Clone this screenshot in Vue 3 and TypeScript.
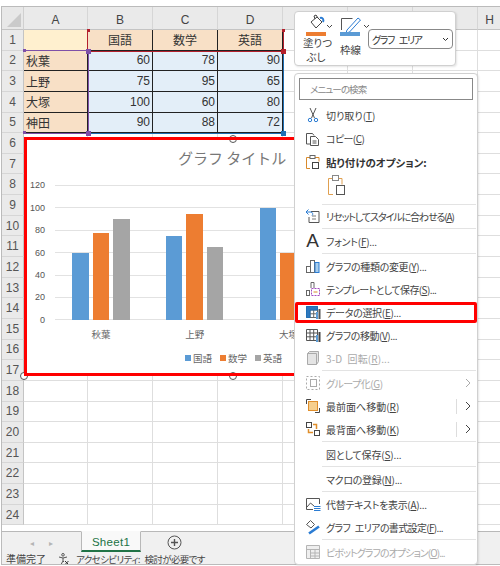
<script setup lang="ts">
const rows = Array.from({ length: 24 }, (_, i) => i + 1)
const cols = ["A", "B", "C", "D", "E", "F", "G", "H"]

const table = [
  { name: "秋葉", vals: [60, 78, 90] },
  { name: "上野", vals: [75, 95, 65] },
  { name: "大塚", vals: [100, 60, 80] },
  { name: "神田", vals: [90, 88, 72] },
]
const heads = ["国語", "数学", "英語"]
const colors = ["#5b9bd5", "#ed7d31", "#a5a5a5"]
const ticks = [120, 100, 80, 60, 40, 20, 0]
const groups = table.slice(0, 3)

const barHeight = (v: number) => `${(v / 120) * 134}px`

// ls: letter spacing per label, the original font has narrower kana
type Item = { label: string; key: string; tail?: string; icon?: string; off?: boolean; sub?: boolean; split?: boolean; line?: boolean; hot?: boolean; ls: number }

const items: Item[] = [
  { label: "リセットしてスタイルに合わせる(", key: "A", tail: ")", icon: "reset", line: true, ls: -1.1 },
  { label: "フォント(", key: "F", tail: ")...", icon: "font", line: true, ls: -0.25 },
  { label: "グラフの種類の変更(", key: "Y", tail: ")...", icon: "bars", ls: -0.35 },
  { label: "テンプレートとして保存(", key: "S", tail: ")...", icon: "tpl", ls: -0.6 },
  { label: "データの選択(", key: "E", tail: ")...", icon: "data", hot: true, ls: -0.3 },
  { label: "グラフの移動(", key: "V", tail: ")...", icon: "move", ls: -0.45 },
  { label: "3-D 回転(", key: "R", tail: ")...", icon: "cube", off: true, line: true, ls: 0.1 },
  { label: "グループ化(", key: "G", tail: ")", icon: "group", off: true, sub: true, ls: -0.5 },
  { label: "最前面へ移動(", key: "R", tail: ")", icon: "front", sub: true, split: true, ls: 0 },
  { label: "最背面へ移動(", key: "K", tail: ")", icon: "back", sub: true, split: true, line: true, ls: 0 },
  { label: "図として保存(", key: "S", tail: ")...", line: true, ls: -0.15 },
  { label: "マクロの登録(", key: "N", tail: ")...", line: true, ls: -0.3 },
  { label: "代替テキストを表示(", key: "A", tail: ")...", icon: "alt", ls: -0.3 },
  { label: "グラフ エリアの書式設定(", key: "F", tail: ")...", icon: "fmt", line: true, ls: -0.65 },
  { label: "ピボットグラフのオプション(", key: "O", tail: ")...", icon: "pivot", off: true, ls: -0.95 },
]
</script>

<template>
  <div class="page">
    <div class="book">
      <div class="sheet">
        <div class="corner"><i></i></div>
        <div v-for="c in cols" :key="c" class="col-head">{{ c }}</div>
        <template v-for="r in rows" :key="r">
          <div class="row-head">{{ r }}</div>
          <div v-for="c in cols" :key="c" class="cell"></div>
        </template>
      </div>

      <div class="data">
        <div class="d a blank"></div>
        <div v-for="h in heads" :key="h" class="d head">{{ h }}</div>
        <template v-for="t in table" :key="t.name">
          <div class="d a">{{ t.name }}</div>
          <div v-for="(v, i) in t.vals" :key="i" class="d num">{{ v }}</div>
        </template>
        <span class="range red"></span>
        <span class="range purple"></span>
        <span class="range blue"></span>
        <b class="dot tiny d1"></b>
        <b class="dot tiny d2"></b>
        <b class="dot tiny d3"></b>
        <b class="dot tiny d4"></b>
        <b class="dot d5"></b>
        <b class="dot d6"></b>
        <b class="dot d7"></b>
        <b class="dot d8"></b>
      </div>

      <div class="chart">
        <div class="chart-title">グラフ タイトル</div>
        <div class="plot">
          <div v-for="t in ticks" :key="t" class="tick"><span>{{ t }}</span><i></i></div>
          <div class="groups">
            <div v-for="g in groups" :key="g.name" class="group">
              <div class="bars">
                <div v-for="(v, i) in g.vals" :key="i" class="bar" :style="{ height: barHeight(v), background: colors[i] }"></div>
              </div>
              <div class="cat">{{ g.name }}</div>
            </div>
          </div>
        </div>
        <div class="legend">
          <span v-for="(h, i) in heads" :key="h"><i :style="{ background: colors[i] }"></i>{{ h }}</span>
        </div>
        <span class="handle top"></span>
        <span class="handle bottom"></span>
        <span class="handle corner-h"></span>
      </div>

      <div class="tabs">
        <div class="nav"><span>◂</span><span>▸</span></div>
        <div class="tab">Sheet1</div>
        <svg class="add" width="15" height="15" viewBox="0 0 15 15" fill="none" stroke="#555">
          <circle cx="7.5" cy="7.5" r="6.5" /><path d="M7.5 4v7M4 7.5h7" stroke-width="1.4" />
        </svg>
      </div>
      <div class="status">
        <span>準備完了</span>
        <svg width="10" height="12" viewBox="0 0 10 12" fill="none" stroke="#555">
          <circle cx="4" cy="1.8" r="1.3" /><path d="M0 4l4 1 4-1M4 5v3L2 11.5M4 8l1 1" /><path d="M6 8l3.5 3.5M9.5 8L6 11.5" stroke="#333" />
        </svg>
        <span class="a11y">アクセシビリティ: 検討が必要です</span>
      </div>
    </div>

    <div class="mini">
      <div class="mini-btn fill">
        <svg width="26" height="25" viewBox="0 0 26 25" fill="none">
          <path d="M8 10l6-5 5 5-6 6z" stroke="#444" />
          <path d="M12 7l-1-3 2-1 2 3" stroke="#444" />
          <path d="M17 6c3-1 4 2 3 4" stroke="#2b7cd3" stroke-width="2" />
          <rect x="3" y="20" width="20" height="4" fill="#ed7d31" />
        </svg>
        <svg class="chev" width="7" height="5" viewBox="0 0 7 5" fill="none" stroke="#444"><path d="M1 1l2.5 2.5L6 1" /></svg>
        <span>塗りつ<br />ぶし</span>
      </div>
      <div class="mini-btn wide">
        <svg width="26" height="25" viewBox="0 0 26 25" fill="none">
          <path d="M1.5 18V6.500h11" stroke="#555" />
          <path d="M7 18l11-12 2.500 2-11 12-3.500 1z" stroke="#2b7cd3" />
          <rect x="0" y="20" width="20" height="4" fill="#5b9bd5" />
        </svg>
        <svg class="chev" width="7" height="5" viewBox="0 0 7 5" fill="none" stroke="#444"><path d="M1 1l2.5 2.5L6 1" /></svg>
        <span>枠線</span>
      </div>
      <div class="select">
        <span>グラフ エリア</span>
        <svg width="7" height="5" viewBox="0 0 7 5" fill="none" stroke="#333"><path d="M1 1l2.5 2.5L6 1" /></svg>
      </div>
    </div>

    <div class="menu">
      <div class="search">メニューの検索</div>
      <div class="mi top-row">
        <div class="ico">
          <svg width="16" height="16" viewBox="0 0 16 16" fill="none" stroke="#555">
            <path d="M5 1l4.500 10M11 1L6.500 11" /><circle cx="5" cy="13" r="1.7" stroke="#2b7cd3" /><circle cx="11" cy="13" r="1.7" stroke="#2b7cd3" />
          </svg>
        </div>
        <span>切り取り(<u>T</u>)</span>
      </div>
      <div class="mi top-row">
        <div class="ico">
          <svg width="16" height="16" viewBox="0 0 16 16" fill="none" stroke="#555">
            <path d="M5 13H1.500V2.500h6l1.500 2" /><path d="M5.500 5.500h5l3 3v6h-8z" /><path d="M7.500 10h4M7.500 12h4" />
          </svg>
        </div>
        <span class="copy">コピー(<u>C</u>)</span>
      </div>
      <div class="mi top-row">
        <div class="ico">
          <svg width="16" height="16" viewBox="0 0 16 16" fill="none">
            <path d="M5 14.500H1.500V3.500H14v4" stroke="#d98a2b" /><rect x="5" y="1.500" width="5" height="3" fill="#fff" stroke="#666" /><rect x="7.500" y="8.500" width="6" height="6" stroke="#444" />
          </svg>
        </div>
        <strong>貼り付けのオプション:</strong>
      </div>
      <div class="paste">
        <svg width="20" height="23" viewBox="0 0 20 23" fill="none">
          <path d="M6 20.500H1.500V4.500H15v6" stroke="#e0a050" /><rect x="5.500" y="1.500" width="6" height="5" fill="#fff" stroke="#888" /><rect x="9.500" y="11.500" width="8" height="9" stroke="#555" />
        </svg>
      </div>

      <div v-for="it in items" :key="it.label + it.key" class="mi" :class="{ off: it.off, line: it.line, hot: it.hot }">
        <div class="ico">
          <svg v-if="it.icon === 'reset'" width="16" height="16" viewBox="0 0 16 16" fill="none" stroke="#555">
            <path d="M6 3.500h8v11H4V9" /><path d="M7 8h4M7 11h4" stroke-width=".8" /><path d="M1 4l2.500-2.500M1 4l2.500 2.500M1 4h5a2 2 0 0 1 1 3.500" stroke="#2b7cd3" />
          </svg>
          <span v-else-if="it.icon === 'font'" class="big-a">A</span>
          <svg v-else-if="it.icon === 'bars'" width="16" height="16" viewBox="0 0 16 16" fill="none" stroke="#666">
            <rect x="1.500" y="8.500" width="4" height="6" /><rect x="5.500" y="2.500" width="4" height="12" /><rect x="10" y="4.500" width="4" height="10" fill="#a8cdeb" stroke="#2b7cd3" />
          </svg>
          <svg v-else-if="it.icon === 'tpl'" width="16" height="16" viewBox="0 0 16 16" fill="none" stroke="#666">
            <rect x="1.500" y="9.500" width="3" height="5" /><path d="M6 7V1.500h3V7" /><rect x="6.500" y="7.500" width="8" height="7" stroke="#a24bc0" stroke-dasharray="2 1" /><path d="M8.500 11h4" stroke="#d98a2b" />
          </svg>
          <svg v-else-if="it.icon === 'data'" width="16" height="16" viewBox="0 0 16 16" fill="none" stroke="#666">
            <path d="M1.500 2.500h11v11h-11zM5 2.500v11M8.700 2.500v11M1.500 6h11M1.500 9.800h11" />
            <path d="M1.500 2.500h11V6H5v7.500H1.500z" fill="#2f78bd" stroke="#1f6fb5" />
            <rect x="11" y="8" width="2" height="7" fill="#5b9bd5" stroke="none" /><rect x="13.500" y="5" width="2" height="10" fill="#555" stroke="none" />
          </svg>
          <svg v-else-if="it.icon === 'move'" width="16" height="16" viewBox="0 0 16 16" fill="none" stroke="#555">
            <path d="M1.500 2.500h11v11h-11zM5 2.500v11M8.700 2.500v11M1.500 6h11M1.500 9.800h11" />
            <rect x="11" y="8" width="2" height="7" fill="#5b9bd5" stroke="none" /><rect x="13.500" y="5" width="2" height="10" fill="#444" stroke="none" />
          </svg>
          <svg v-else-if="it.icon === 'cube'" width="16" height="16" viewBox="0 0 16 16" fill="#e4e4e4" stroke="#aaa">
            <path d="M2.500 3.500l2-2h9v10l-2 3h-9z" /><path d="M2.500 3.500h9v11" fill="none" />
          </svg>
          <svg v-else-if="it.icon === 'group'" width="16" height="16" viewBox="0 0 16 16" fill="none" stroke="#aaa">
            <rect x="1.500" y="1.500" width="13" height="13" stroke-dasharray="2 2" /><rect x="5.500" y="4.500" width="6" height="7" />
          </svg>
          <svg v-else-if="it.icon === 'front'" width="16" height="16" viewBox="0 0 16 16" fill="none" stroke="#444">
            <path d="M1.500 6V1.500H6M10 14.500h4.500V10" /><rect x="3.500" y="3.500" width="9" height="9" fill="#f6cf8e" stroke="#e08e2b" />
          </svg>
          <svg v-else-if="it.icon === 'back'" width="16" height="16" viewBox="0 0 16 16" fill="none" stroke="#444">
            <rect x="1.500" y="1.500" width="5" height="5" /><rect x="9.500" y="9.500" width="5" height="5" />
            <path d="M8 3.500h3.500V8M3.500 8V11.500H8" stroke="#e08e2b" stroke-width="1.5" />
          </svg>
          <svg v-else-if="it.icon === 'alt'" width="16" height="16" viewBox="0 0 16 16" fill="none" stroke="#555">
            <path d="M8 13.500H1.500v-11h13V8" /><path d="M2 11l3.500-4L9 10" /><path d="M9 10.500h6.500M9 12.500h6.500M9 14.500h6.500" stroke="#2b7cd3" />
          </svg>
          <svg v-else-if="it.icon === 'fmt'" width="16" height="16" viewBox="0 0 16 16" fill="none" stroke="#555">
            <path d="M1.500 5.500l4-4 4 4-3.500 3.500z" /><path d="M4 14.500l10-7" stroke="#2b7cd3" stroke-width="2.600" />
          </svg>
          <svg v-else-if="it.icon === 'pivot'" width="16" height="16" viewBox="0 0 16 16" fill="#efefef" stroke="#b5b5b5">
            <path d="M1.500 1.500h13v13h-13zM1.500 5.500h13M5.500 5.500v9M5.500 9h9M5.500 12h9M10 5.500v9" />
          </svg>
        </div>
        <span class="label" :style="{ letterSpacing: it.ls + 'px' }">{{ it.label }}<u>{{ it.key }}</u>{{ it.tail }}</span>
        <i v-if="it.split" class="split"></i>
        <svg v-if="it.sub" class="arrow" width="6" height="10" viewBox="0 0 6 10" fill="none" :stroke="it.off ? '#aaa' : '#444'">
          <path d="M1 1l4 4-4 4" />
        </svg>
      </div>
    </div>
  </div>
</template>

<style>
html,
body {
  margin: 0;
  background: #fff;
}
</style>

<style scoped>
.page {
  position: relative;
  width: 500px;
  height: 566px;
  overflow: hidden;
  font-family: "Noto Sans CJK JP", "Liberation Sans", sans-serif;
  font-feature-settings: "palt";
  color: #333;
  background: #fff;
}

.book {
  position: absolute;
  left: 1px;
  top: 6px;
  width: 499px;
  height: 559px;
  box-sizing: border-box;
  border-left: 1px solid #bbb;
  border-top: 1px solid #bbb;
  border-bottom: 1px solid #bbb;
  overflow: hidden;
}

.sheet {
  display: grid;
  grid-template-columns: 22px 64px repeat(6, 65px) 24px;
  grid-template-rows: 23px repeat(24, 20.65px);
  width: 500px;
}

.corner {
  background: #e8e8e8;
  border-right: 1px solid #d0d0d0;
  border-bottom: 1px solid #c4c4c4;
  position: relative;
}

.corner i {
  position: absolute;
  right: 2px;
  bottom: 2px;
  border-style: solid;
  border-width: 0 0 14px 14px;
  border-color: transparent transparent #cacaca transparent;
}

.col-head {
  background: #eaeaea;
  font: 12px "Liberation Sans", sans-serif;
  color: #444;
  display: flex;
  align-items: center;
  justify-content: center;
  padding-top: 3px;
  border-right: 1px solid #d6d6d6;
  border-bottom: 1px solid #c4c4c4;
}

.row-head {
  background: #eaeaea;
  font: 12px "Liberation Sans", sans-serif;
  color: #555;
  display: flex;
  align-items: center;
  justify-content: center;
  border-right: 1px solid #c4c4c4;
  border-bottom: 1px solid #d6d6d6;
}

.cell {
  border-right: 1px solid #dedede;
  border-bottom: 1px solid #dedede;
}

.data {
  position: absolute;
  left: 22px;
  top: 23px;
  display: grid;
  grid-template-columns: 64px 65px 65px 65px;
  grid-template-rows: repeat(5, 20.65px);
  font-size: 12px;
}

.d {
  display: flex;
  align-items: center;
  padding: 0 2px;
  box-sizing: border-box;
  border-right: 1px solid #222;
  border-bottom: 1px solid #222;
  background: #f8e0c6;
  color: #333;
}

.d.blank {
  background: #fff0cf;
  border-color: transparent;
}

.d.head {
  justify-content: center;
}

.d.num {
  justify-content: flex-end;
  background: #e3eef8;
  font: 12px "Liberation Sans", sans-serif;
}

.range {
  position: absolute;
  box-sizing: border-box;
}

.range.red {
  left: 63px;
  top: 0;
  width: 197px;
  height: 22px;
  border: 1.5px solid #b3202c;
  border-top: 0;
}

.range.purple {
  left: 0;
  top: 20px;
  width: 65px;
  height: 84px;
  border: 1.5px solid #7e50a8;
  border-left: 0;
}

.range.blue {
  left: 65px;
  top: 22px;
  width: 195px;
  height: 82px;
  border: 1.5px solid #1f6fb5;
  border-top: 0;
  border-left: 0;
}

.dot {
  position: absolute;
  width: 5px;
  height: 5px;
}

.dot.tiny {
  width: 3px;
  height: 3px;
}

.d1 {
  left: 63px;
  top: -1px;
  background: #b3202c;
}

.d2 {
  left: 258px;
  top: -1px;
  background: #b3202c;
}

.d3 {
  left: -1px;
  top: 19px;
  background: #7e50a8;
}

.d4 {
  left: -1px;
  top: 101px;
  background: #7e50a8;
}

.d5 {
  left: 62px;
  top: 19px;
  background: #7e50a8;
}

.d6 {
  left: 257px;
  top: 19px;
  background: #b3202c;
}

.d7 {
  left: 62px;
  top: 101px;
  background: #7e50a8;
}

.d8 {
  left: 257px;
  top: 101px;
  background: #1f6fb5;
}

.chart {
  position: absolute;
  left: 22px;
  top: 130px;
  width: 300px;
  height: 239px;
  background: #fff;
}

.chart::after {
  content: "";
  position: absolute;
  inset: 0;
  border: 3px solid #f00;
}

.chart-title {
  padding-left: 154px;
  padding-top: 11px;
  font-size: 15px;
  font-feature-settings: normal;
  line-height: 20px;
  color: #777;
  white-space: nowrap;
}

.plot {
  position: absolute;
  left: 3px;
  top: 37.3px;
  width: 297px;
}

.tick {
  display: flex;
  align-items: center;
  height: 22.4px;
  font: 9px "Liberation Sans", sans-serif;
  color: #555;
}

.tick span {
  width: 18px;
  text-align: right;
}

.tick i {
  flex: 1;
  margin-left: 10px;
  height: 1px;
  background: #e2e2e2;
}

.groups {
  position: absolute;
  left: 27.2px;
  top: 11.7px;
  display: flex;
  height: 134px;
}

.group {
  position: relative;
  width: 93.7px;
  display: flex;
  justify-content: center;
}

.bars {
  display: flex;
  gap: 4px;
  align-items: flex-end;
  height: 134px;
}

.bar {
  width: 16.5px;
}

.cat {
  position: absolute;
  top: 141px;
  left: 0;
  right: 0;
  text-align: center;
  font-size: 9.5px;
  color: #666;
}

.legend {
  position: absolute;
  left: 161px;
  top: 215px;
  display: flex;
  gap: 8px;
  font-size: 9.5px;
  line-height: 12px;
  color: #666;
}

.legend span {
  display: flex;
  align-items: center;
  gap: 2px;
}

.legend i {
  width: 6px;
  height: 6px;
}

.handle {
  position: absolute;
  width: 8px;
  height: 8px;
  box-sizing: border-box;
  border: 1.5px solid #555;
  border-radius: 50%;
  background: #fff;
}

.handle.top {
  left: 205px;
  top: -2px;
}

.handle.bottom {
  left: 205px;
  top: 235px;
}

.handle.corner-h {
  left: -4px;
  top: 235px;
}

.tabs {
  position: absolute;
  left: 0;
  top: 524px;
  width: 100%;
  height: 21px;
  box-sizing: border-box;
  background: #f0f0f0;
  border-top: 1px solid #b8b8b8;
  display: flex;
}

.nav {
  width: 79px;
  display: flex;
  gap: 15px;
  justify-content: center;
  font-size: 8px;
  line-height: 22px;
  color: #b5b5b5;
}

.tab {
  width: 60px;
  height: 21px;
  margin-top: -1px;
  background: #f9f9f9;
  border: 1px solid #b8b8b8;
  border-top-color: #f9f9f9;
  border-bottom: 2px solid #217346;
  box-sizing: border-box;
  font: 11.5px/20px "Liberation Sans", sans-serif;
  letter-spacing: 0.3px;
  color: #217346;
  text-align: center;
}

.add {
  margin: 3px 0 0 26px;
}

.status {
  position: absolute;
  left: 0;
  top: 545px;
  width: 100%;
  height: 13px;
  background: #f0f0f0;
  display: flex;
  align-items: center;
  padding-left: 4px;
  font-size: 10px;
  white-space: nowrap;
  color: #444;
}

.status svg {
  margin-left: 13px;
}

.a11y {
  margin-left: 7px;
  font-size: 9.5px;
  letter-spacing: -0.6px;
  word-spacing: 3px;
}

.mini {
  position: absolute;
  left: 294px;
  top: 11px;
  width: 162px;
  height: 55px;
  box-sizing: border-box;
  background: #fff;
  border: 1px solid #d0d0d0;
  border-radius: 4px;
  box-shadow: 1px 1px 2px rgba(0, 0, 0, 0.1);
  display: flex;
  padding-left: 8px;
}

.mini-btn {
  position: relative;
  width: 26px;
  font-size: 10.5px;
  line-height: 14px;
  text-align: center;
  color: #444;
  flex-shrink: 0;
}

.mini-btn svg {
  display: block;
}

.mini-btn svg.chev {
  position: absolute;
  left: 23px;
  top: 12px;
}

.mini-btn span {
  display: block;
  margin-top: -1px;
  white-space: nowrap;
}

.mini-btn.fill {
  margin-right: 11px;
}

.mini-btn.wide {
  margin-right: 2px;
}

.mini-btn.wide span {
  margin-top: 6px;
  margin-right: 6px;
}

.select {
  align-self: flex-start;
  margin-top: 17px;
  width: 85px;
  height: 20px;
  box-sizing: border-box;
  border: 1px solid #888;
  border-radius: 4px;
  display: flex;
  align-items: center;
  justify-content: space-between;
  padding: 0 3px;
  font-size: 10px;
  letter-spacing: -1.4px;
  word-spacing: 4px;
  white-space: nowrap;
  color: #333;
}

.menu {
  position: absolute;
  left: 294px;
  top: 73px;
  width: 184px;
  height: 492px;
  box-sizing: border-box;
  background: #fff;
  border: 1px solid #d0d0d0;
  border-radius: 4px;
  box-shadow: 1px 1px 2px rgba(0, 0, 0, 0.1);
  padding: 4px 4px 0;
  font-size: 10px;
}

.search {
  height: 22px;
  box-sizing: border-box;
  border: 1px solid #888;
  padding-left: 10px;
  line-height: 20px;
  font-size: 9.5px;
  letter-spacing: -0.9px;
  color: #888;
  margin-bottom: 3.5px;
}

.mi {
  position: relative;
  display: flex;
  align-items: center;
  box-sizing: border-box;
  height: 23px;
  white-space: nowrap;
  color: #444;
}

.mi.top-row {
  height: 23.5px;
}

.mi strong {
  font-size: 10.5px;
  font-weight: 700;
  color: #333;
}

.label {
  word-spacing: 3px;
}

.copy {
  letter-spacing: -0.6px;
}

.mi.off {
  color: #aaa;
}

.mi.line {
  height: 25px;
  padding-bottom: 2px;
}

.mi.line::after {
  content: "";
  position: absolute;
  left: 23px;
  right: -3px;
  bottom: 1px;
  height: 1px;
  background: #e3e3e3;
}

.mi.hot::before {
  content: "";
  position: absolute;
  left: -4px;
  right: -4px;
  top: 1.5px;
  bottom: 0.5px;
  border: 3px solid #f00;
  border-radius: 2px;
}

.ico {
  width: 27px;
  flex-shrink: 0;
  display: flex;
  justify-content: center;
}

.big-a {
  font: 19px/18px "Liberation Sans", sans-serif;
  color: #333;
}

.paste {
  height: 30.5px;
  box-sizing: border-box;
  margin: 0 -3px 0 23px;
  padding-left: 5px;
  border-bottom: 1px solid #e3e3e3;
}

.split {
  position: absolute;
  right: 16px;
  top: 4px;
  width: 1px;
  height: 15px;
  background: #ddd;
}

.arrow {
  position: absolute;
  right: 2px;
  top: 6px;
}
</style>
